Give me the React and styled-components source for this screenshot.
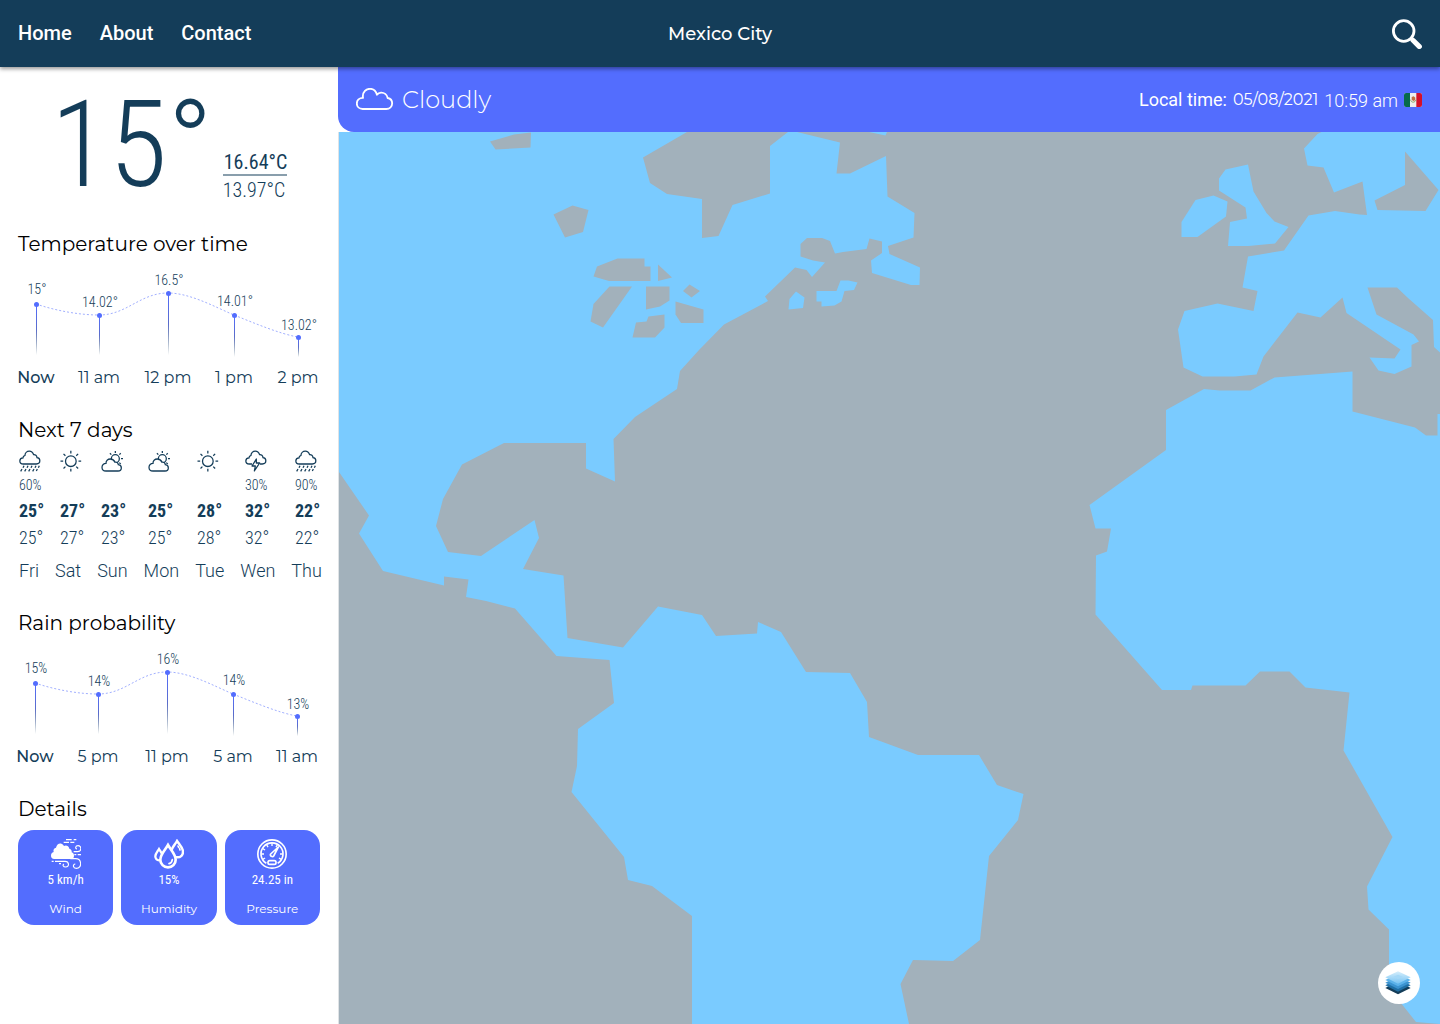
import React from "react";
import styled, { createGlobalStyle } from "styled-components";

const navy = "#143d59";
const indigo = "#536dfe";
const land = "#7acbff";
const sea = "#a2b1bb";
const roboto = `Roboto, "Liberation Sans", sans-serif`;
const condensed = `"Roboto Condensed", Roboto, sans-serif`;
const montserrat = `Montserrat, Inter, sans-serif`;

const GlobalStyle = createGlobalStyle`
  *, *::before, *::after { box-sizing: border-box; }
  body { margin: 0; background: #fff; color: ${navy}; font-family: ${roboto}; }
  h2, p, ul, dl, dd { margin: 0; padding: 0; }
`;

const Page = styled.div`
  min-height: 100vh;
  display: flex;
  flex-direction: column;
`;

/* ---------- header ---------- */

const Header = styled.header`
  position: relative;
  z-index: 1;
  display: grid;
  grid-template-columns: 1fr auto 1fr;
  align-items: center;
  min-height: 67px;
  padding: 0 18px;
  color: #fff;
  background: ${navy};
  box-shadow: 0 2px 4px rgba(0, 0, 0, 0.4);
`;

const Nav = styled.nav`
  display: flex;
  gap: 28px;
  padding-bottom: 2px;
`;

const NavLink = styled.a`
  color: inherit;
  font-size: 20px;
  font-weight: 500;
  line-height: 24px;
  text-decoration: none;
`;

const City = styled.span`
  font-family: ${montserrat};
  font-size: 18px;
  font-weight: 500;
  line-height: 24px;
`;

const IconButton = styled.button`
  display: flex;
  justify-self: end;
  padding: 0;
  border: 0;
  color: inherit;
  background: none;
  cursor: pointer;
`;

/* ---------- layout ---------- */

const Body = styled.div`
  flex: 1;
  display: flex;
`;

const Sidebar = styled.aside`
  flex: none;
  width: 338px;
  padding: 18px;
`;

const Main = styled.main`
  flex: 1;
  min-width: 0;
  display: flex;
  flex-direction: column;
`;

const Section = styled.section`
  margin-bottom: 26px;
`;

const Heading = styled.h2`
  color: #000;
  font-family: ${montserrat};
  font-size: 20px;
  font-weight: 400;
  line-height: 24px;
`;

/* ---------- current temperature ---------- */

const Current = styled.div`
  display: flex;
  justify-content: center;
  align-items: flex-end;
  gap: 10px;
  margin-bottom: 27px;
`;

const BigTemp = styled.p`
  font-family: ${condensed};
  font-size: 120px;
  font-weight: 300;
  line-height: 120px;
`;

const Range = styled.div`
  padding-bottom: 3px;
  font-family: ${condensed};
  font-size: 20px;
  line-height: 24px;
`;

const High = styled.p`
  padding-left: 1px;
  border-bottom: 2px solid rgba(20, 61, 89, 0.5);
`;

const Low = styled.p`
  padding-top: 2px;
  font-weight: 300;
`;

/* ---------- charts ---------- */

const ChartSvg = styled.svg`
  display: block;
  width: 100%;
  overflow: visible;
`;

const ValueText = styled.text`
  fill: ${navy};
  font-family: ${condensed};
  font-size: 14px;
  font-weight: 300;
  text-anchor: middle;
`;

const TimeText = styled.text`
  fill: ${navy};
  font-family: ${montserrat};
  font-size: 16px;
  font-weight: ${(p) => (p.$now ? 500 : 400)};
  text-anchor: middle;
`;

/* ---------- week ---------- */

const Week = styled.table`
  display: block;
  margin-top: 8px;
  padding-left: 1px;
  white-space: nowrap;
`;

const WeekGroup = styled.tbody`
  display: block;
`;

const WeekRow = styled.tr`
  display: grid;
  grid-template-columns: 41px 41px 47px 49px 48px 50px auto;
  align-items: center;
  font-family: ${condensed};
  font-size: ${(p) => (p.$small ? 14 : 18)}px;
  font-weight: ${(p) => (p.$strong ? 700 : 300)};
  line-height: ${(p) => (p.$small ? 24 : 27)}px;
`;

const DayRow = styled.tr`
  display: flex;
  gap: 16px;
  padding: 6px 0 1px;
  font-size: 18px;
  line-height: 27px;
`;

const Cell = styled.td`
  padding: 0;
  height: ${(p) => (p.$icon ? "23px" : "auto")};
`;

const DayCell = styled.th`
  padding: 0;
  font-weight: 300;
`;

/* ---------- details ---------- */

const Cards = styled.dl`
  display: grid;
  grid-template-columns: repeat(3, 1fr);
  gap: 8px;
  margin-top: 9px;
`;

const Card = styled.div`
  display: flex;
  flex-direction: column;
  align-items: center;
  padding: 9px 0 8px;
  border-radius: 16px;
  color: #fff;
  background: ${indigo};
  line-height: 16px;
`;

const CardValue = styled.dd`
  padding: 3px 0 13px;
  font-family: ${condensed};
  font-size: 13px;
`;

const CardLabel = styled.dt`
  order: 1;
  font-family: ${montserrat};
  font-size: 12px;
`;

/* ---------- banner and map ---------- */

const Banner = styled.div`
  display: flex;
  align-items: center;
  justify-content: space-between;
  min-height: 65px;
  padding: 0 18px;
  border-bottom-left-radius: 16px;
  color: #fff;
  background: ${indigo};
`;

const Condition = styled.div`
  display: flex;
  align-items: center;
  gap: 8px;
  font-family: ${montserrat};
  font-size: 24px;
  font-weight: 300;
  line-height: 32px;
`;

const LocalTime = styled.div`
  display: flex;
  align-items: center;
  gap: 6px;
  font-size: 18px;
  line-height: 24px;
`;

const DateText = styled.time`
  font-family: ${montserrat};
  font-size: 16px;
`;

const ClockText = styled.time`
  padding-top: 2px;
  font-weight: 300;
`;

const MapPanel = styled.div`
  position: relative;
  flex: 1;
  min-height: 400px;
  border-left: 1px solid #dfe3e6;
  background: ${sea};
  overflow: hidden;
`;

const MapSvg = styled.svg`
  position: absolute;
  inset: 0;
  width: 100%;
  height: 100%;
`;

const LayersButton = styled.button`
  position: absolute;
  right: 20px;
  bottom: 20px;
  display: grid;
  place-items: center;
  width: 42px;
  height: 42px;
  padding: 0 2px 0 0;
  border: 0;
  border-radius: 50%;
  background: #fff;
  cursor: pointer;
`;

/* ---------- icons ---------- */

const SearchIcon = () => (
  <svg width="30" height="30" viewBox="0 0 30 30" fill="none" stroke="#fff" aria-hidden="true">
    <circle cx="11.7" cy="12" r="10.3" strokeWidth="2.8" />
    <path d="M18.6 19 L21 21.5" strokeWidth="3" />
    <path d="M21 21.3 L27.4 27.6" strokeWidth="5" strokeLinecap="round" />
  </svg>
);

const CloudIcon = () => (
  <svg width="38" height="24" viewBox="0 0 114 72" fill="none" stroke="#fff" strokeWidth="5.6" strokeLinejoin="round" aria-hidden="true">
    <path d="M20 63 H91 C101 63 108.500 56 108.500 46 C108.500 38 103 31.500 95 30 C93 20 84 13.500 75 14 C71 14.500 66 16.500 63 20 C60 9 52 2.500 42 2.500 C30 2.500 20.500 12 20.500 25 C20.500 27 20.500 28 21 29.500 C10 29.500 2.500 37 2.500 46.500 C2.500 56 10 63 20 63Z" />
  </svg>
);

const cloudTop =
  "H51 C57 40 61.500 36 61.500 30.500 C61.500 25.500 58 21.500 53 21 C52.500 15 48 11.500 43 12 C40.500 5.500 35.500 1.500 30 1.500 C22.500 1.500 17 7 17 14 C13.500 15 11 18 11 21.500 C5.500 22 1.500 26 1.500 31 C1.500 36 6 40 12 40";

const rays = (cx, cy, from, to, list) =>
  list
    .map((a) => {
      const c = Math.cos((a * Math.PI) / 180);
      const s = Math.sin((a * Math.PI) / 180);
      return `M${cx + c * from} ${cy + s * from}L${cx + c * to} ${cy + s * to}`;
    })
    .join("");

const weatherShapes = {
  rain: (
    <>
      <path d={`M12 40 ${cloudTop}Z`} />
      <path d="M14 45l-3 6M26 45l-3 6M38 45l-3 6M50 45l-3 6M60 45l-3 6M8 55l-4 7M20 55l-4 7M32 55l-4 7M44 55l-4 7M54 55l-3 6" />
    </>
  ),
  sun: (
    <>
      <circle cx="31.500" cy="31.500" r="16" />
      <path d={rays(31.5, 31.5, 23, 31, [0, 45, 90, 135, 180, 225, 270, 315])} />
    </>
  ),
  partly: (
    <>
      <circle cx="42" cy="24" r="12" />
      <path d={rays(42, 24, 17, 23, [-90, -45, 0, 45, 225])} />
      <path
        fill="#fff"
        d="M14 61 H50 C56 61 60 57 60 52 C60 46.500 56 42.500 51 42 C50 36 46 33.500 41 34.500 C38 28 32 25 27 25 C19 25 14 31 14 38 C7 38 2 43 2 49.500 C2 56 7 61 14 61Z"
      />
    </>
  ),
  storm: (
    <>
      <path d="M20 40 H12 C6 40 1.500 36 1.500 31 C1.500 26 5.500 22 11 21.500 C11 18 13.500 15 17 14 C17 7 22.500 1.500 30 1.500 C35.500 1.500 40.500 5.500 43 12 C48 11.500 52.500 15 53 21 C58 21.500 61.500 25.500 61.500 30.500 C61.500 36 57 40 51 40 H44" />
      <path d="M33 25 L20 46 H30 L27 61 L43 37 H33Z" strokeLinejoin="round" />
    </>
  ),
};

const WeatherIcon = ({ kind }) => (
  <svg width="23" height="22" viewBox="-1 -2 69 66" fill="none" stroke={navy} strokeWidth="3.8" role="img" aria-label={kind}>
    {weatherShapes[kind]}
  </svg>
);

const detailShapes = {
  wind: (
    <>
      <path
        fill="#fff"
        stroke="none"
        d="M10 60 C3 60 0 55 0 50 C0 44 3 40 8 39 C6 32 9 27 15 26 C17 17 24 12 31 14 C35 15 37 18 39 21 C46 17 53 21 55 29 C61 31 63 35 62 40 C67 41 69 46 69 50 C69 56 66 60 60 60Z"
      />
      <path
        strokeWidth="3.4"
        d="M45 2H62M68 2H76M38 10H54M58 10H70M68 38H80C92 38 93 20 81 20C73 20 72 29 78 30M70 47H76M80 47H90M2 67H8M12 67H42C55 67 56 84 44 84C36 84 34 77 39 75M58 59H74C93 59 94 88 76 88C66 88 64 76 73 75M24 74H30"
      />
    </>
  ),
  humidity: (
    <>
      <path strokeWidth="7" d="M15 30C10 38 4 45 4 52C4 59 9 64 15 64C22 64 26 59 26 52C26 45 20 38 15 30Z" />
      <path strokeWidth="7.5" d="M69 6C63 17 52 27 52 38C52 48 60 55 70 55C80 55 87 48 87 38C87 27 76 17 69 6Z" />
      <path fill={indigo} strokeWidth="8" d="M42 18C34 32 19 46 19 62C19 75 29 85 42 85C55 85 65 75 65 62C65 46 50 32 42 18Z" />
      <path strokeWidth="5" strokeLinecap="round" d="M55 62C54 69 50 73 45 74M72 21L74 25M77 29L78 33" />
    </>
  ),
  pressure: (
    <>
      <circle cx="45" cy="45" r="42.500" strokeWidth="5" />
      <path strokeWidth="5" d="M28 73A33 33 0 1 1 62 73" />
      <path strokeWidth="4" d={rays(45, 45, 24, 32, [-180, -150, -120, -90, -60, 0, 150, 30])} />
      <path strokeWidth="5" strokeLinejoin="round" d="M41 45L64 24L50 51C47 55 37 51 41 45Z" />
      <rect x="33" y="65" width="24" height="11" rx="5" strokeWidth="5" />
    </>
  ),
};

const DetailIcon = ({ kind }) => (
  <svg width="30" height="30" viewBox="0 0 90 90" fill="none" stroke="#fff" aria-hidden="true">
    {detailShapes[kind]}
  </svg>
);

const FlagIcon = () => (
  <svg width="18" height="14" viewBox="0 0 54 42" role="img" aria-label="Mexico">
    <defs>
      <clipPath id="flag-shape">
        <rect width="54" height="42" rx="6" />
      </clipPath>
    </defs>
    <g clipPath="url(#flag-shape)">
      <path fill="#eee" d="M0 0H54V42H0Z" />
      <path fill="#066a4a" d="M0 0H18V42H0Z" />
      <path fill="#d3102a" d="M37 0H54V42H37Z" />
    </g>
    <path fill="#c0703f" d="M23 12l6-2 5 4-1 8-5 2-5-4z" />
    <path fill="none" stroke="#8ea96a" strokeWidth="3" d="M20 20C20 30 35 30 35 20" />
  </svg>
);

const layerColors = ["#143d59", "#1f6fa5", "#3b93d0", "#5cb2ea"];

const LayersIcon = () => (
  <svg width="26" height="24" viewBox="0 0 78 72" aria-hidden="true">
    <defs>
      <linearGradient id="layer-top" x1="0" y1="0" x2="0" y2="1">
        <stop offset="0" stopColor="#d5eefc" />
        <stop offset="1" stopColor="#79c4f3" />
      </linearGradient>
    </defs>
    {layerColors.map((color, i) => (
      <path key={color} fill={color} d={`M39 ${30 - i * 7}L77 ${51 - i * 8}L39 ${70 - i * 8}L1 ${51 - i * 8}Z`} />
    ))}
    <path fill="url(#layer-top)" d="M39 1L77 19L39 38L1 19Z" />
    <path fill="#a5d8f7" d="M39 11L53 17L39 24L25 17Z" />
  </svg>
);

/* ---------- data ---------- */

const temperature = [
  { x: 18, y: 48, end: 99, gap: 10, value: "15°", time: "Now" },
  { x: 81, y: 59, end: 99, gap: 8, value: "14.02°", time: "11 am" },
  { x: 150, y: 37, end: 99, gap: 8, value: "16.5°", time: "12 pm" },
  { x: 216, y: 59, end: 101, gap: 9, value: "14.01°", time: "1 pm" },
  { x: 280, y: 81, end: 101, gap: 7, value: "13.02°", time: "2 pm" },
];

const rain = [
  { x: 17, y: 48, end: 99, gap: 10, value: "15%", time: "Now" },
  { x: 80, y: 59, end: 99, gap: 8, value: "14%", time: "5 pm" },
  { x: 149, y: 37, end: 99, gap: 8, value: "16%", time: "11 pm" },
  { x: 215, y: 59, end: 101, gap: 9, value: "14%", time: "5 am" },
  { x: 279, y: 81, end: 101, gap: 7, value: "13%", time: "11 am" },
];

const days = [
  { day: "Fri", icon: "rain", chance: "60%", high: "25°", low: "25°" },
  { day: "Sat", icon: "sun", chance: "", high: "27°", low: "27°" },
  { day: "Sun", icon: "partly", chance: "", high: "23°", low: "23°" },
  { day: "Mon", icon: "partly", chance: "", high: "25°", low: "25°" },
  { day: "Tue", icon: "sun", chance: "", high: "28°", low: "28°" },
  { day: "Wen", icon: "storm", chance: "30%", high: "32°", low: "32°" },
  { day: "Thu", icon: "rain", chance: "90%", high: "22°", low: "22°" },
];

const details = [
  { icon: "wind", value: "5 km/h", label: "Wind" },
  { icon: "humidity", value: "15%", label: "Humidity" },
  { icon: "pressure", value: "24.25 in", label: "Pressure" },
];

const curve = (p) =>
  `M${p[0].x} ${p[0].y}` +
  `C${p[0].x + 21} ${p[0].y + 7} ${p[1].x - 19} ${p[1].y} ${p[1].x} ${p[1].y}` +
  `C${p[1].x + 28} ${p[1].y} ${p[2].x - 28} ${p[2].y} ${p[2].x} ${p[2].y}` +
  `C${p[2].x + 22} ${p[2].y} ${p[3].x - 19} ${p[3].y - 8} ${p[3].x} ${p[3].y}` +
  `C${p[3].x + 20} ${p[3].y + 8} ${p[4].x - 18} ${p[4].y - 3} ${p[4].x} ${p[4].y}`;

const Chart = ({ id, label, points }) => (
  <ChartSvg viewBox="0 0 302 136" role="img" aria-label={label}>
    <defs>
      <linearGradient id={id} x1="0" y1="0" x2="0" y2="1">
        <stop offset="0" stopColor={indigo} />
        <stop offset="0.5" stopColor="#5a6ccb" />
        <stop offset="1" stopColor={navy} stopOpacity="0" />
      </linearGradient>
    </defs>
    <path d={curve(points)} fill="none" stroke={indigo} strokeOpacity="0.55" strokeDasharray="2 2" />
    {points.map((p) => (
      <g key={p.time}>
        <rect x={p.x} y={p.y} width="1" height={p.end - p.y} fill={`url(#${id})`} />
        <circle cx={p.x + 0.5} cy={p.y + 0.5} r="2.500" fill={indigo} />
        <ValueText x={p.x + 1} y={p.y - p.gap}>{p.value}</ValueText>
        <TimeText $now={p.time === "Now"} x={p.x} y="127">{p.time}</TimeText>
      </g>
    ))}
  </ChartSvg>
);

const lands = [
  // the Americas
  "339,132 687,132 643,157.5 650,183 667,194 702,199 702,238 718.5,236 732.5,205 770,193.5 770,146 788,132 797,132 840,142.5 836.5,173.5 850,173.5 886,156 887.5,196.5 914.5,213 913.5,237.5 888,246 889.5,254 920,267.5 919.5,285 911,285 872,273 871,260.5 882,253 882,241.5 869.5,238.5 866.5,249 843,252 835,253.5 830,241 822,238 807,238 800.5,244 800.5,256.5 813,260.5 825,262.5 812,277 806.5,270 795,267.5 765,296.5 768,301 724,324.5 699,350 680,371 677,389 635,417 613.5,439 615,481.5 586,468.5 586,443 504,443 462,464.5 443,499 436,526 448,552 481,556 534.5,520 539,538 523,569 563.5,575.5 567.5,638 623,647.5 658,606.5 702,615 716,636 757,633.5 758,622 781,632 806,672 850,673 867,702 869,737 918,755 979,755 997,785 1023.5,794 1018,820 989,856 980,940 953,961 913,960 900.5,984 909,1024 692,1024 692,916 652,886 628,880 624,857 571.5,792 577,766 578,729 614,703 609.5,660 556.5,656 515,608.5 486,601 466,597 468.5,579.5 444,576.5 444,585.5 383,571 359,533.5 369,515.5 339,472",
  "869,132 887,132 885.5,135.5",
  // Atlantic islands
  "796,291.5 804.5,297.5 803,308 788.5,309.5 789.5,299",
  "816.5,291 836.5,291 840.5,280.5 848.5,280.5 857.5,282.5 854,290 844.5,291 841.5,301.5 834.5,305.5 821.5,306.5 821.5,301.5 816.5,301.5",
  // Britain and Ireland
  "1248,164.5 1253.5,191.5 1266.5,213 1274.5,221.5 1288.5,227 1275,243.5 1248.5,246 1228,246 1230,222 1247,218.5 1245.5,207.5 1219,190.5 1219,178.5 1225.5,169.5",
  "1213.5,195.5 1227.5,201.5 1226,216.5 1197.5,237 1181.5,237 1181.5,222 1195.5,200",
  // Europe
  "1440,132 1321.5,132 1317.5,134 1304,148.5 1307.5,165.5 1323.5,167.5 1334,192.5 1362.5,181.5 1367,215 1359.5,214.5 1335,211 1308.5,215.5 1284,250.5 1248,256.5 1242.5,287.5 1257.5,291 1253.5,311 1217.5,303.5 1184.5,311 1178,329.5 1183.5,367.5 1202.5,376.5 1234.5,376.5 1256.5,374.5 1263.5,356.5 1297.5,312.5 1320.5,317.5 1342.5,297.5 1346.5,313 1400.5,349.5 1394.5,358.5 1369.5,357.5 1378.5,370.5 1394.5,374 1411.5,366.5 1411.5,345 1419,341.5 1413.5,334.5 1376.5,314.5 1367.5,287.5 1397,287.5 1408,298 1433,320 1434,347 1440,352.5",
  // Africa
  "1166,410 1204,389 1219.5,390.5 1250.5,390.5 1274.5,377.5 1352.5,371.5 1352.5,411.5 1415,427.5 1426,435.5 1437.5,435.5 1437.5,414 1440,414 1440,1024 1416,1022 1389,988 1389,929.5 1368.5,909.5 1367,886.5 1392.5,837 1343.5,750.5 1349.5,692.5 1305.5,687.5 1289.5,671.5 1260,671.5 1245.5,685.5 1192.5,685.5 1191,690 1162,690 1095.5,614.5 1096,555.5 1107,551.5 1111,528.5 1095.5,528.5 1089.5,505 1166,450",
];

const waters = [
  "490,141.5 514,134.5 531,132.5 530.5,147.5 495.5,149.5",
  "553.5,214.5 572.5,205.5 588.5,210 583,232 565,237.5",
  "617.5,258.5 644.5,258.5 644.5,266.5 650.5,266.5 650.5,281 609,281 593.5,276.5 597,266.5",
  "658,264.5 672,277.5 658,281",
  "609.5,286.5 632,286.5 603,327.5 590.5,321.5 593.5,304",
  "646,286.5 669.5,286.5 669.5,300.5 660,306.5 646,309.5",
  "689.5,284.5 700,291 691.5,297.5 683,291",
  "675.5,301.5 703.5,309.5 703.5,323 681,323 675.5,314.5",
  "648.5,316.5 664.5,314.5 664.5,327.5 655,337.5 632.5,337.5 636,322.5 646.5,321.5",
  "1405,151.5 1438.5,190 1425.5,211 1377.5,210 1374.5,200.5 1405,185",
];

export default function App() {
  return (
    <Page>
      <GlobalStyle />
      <Header>
        <Nav>
          <NavLink href="#home">Home</NavLink>
          <NavLink href="#about">About</NavLink>
          <NavLink href="#contact">Contact</NavLink>
        </Nav>
        <City>Mexico City</City>
        <IconButton type="button" aria-label="Search">
          <SearchIcon />
        </IconButton>
      </Header>
      <Body>
        <Sidebar>
          <Current>
            <BigTemp>15°</BigTemp>
            <Range>
              <High>16.64°C</High>
              <Low>13.97°C</Low>
            </Range>
          </Current>
          <Section>
            <Heading>Temperature over time</Heading>
            <Chart id="stem-temperature" label="Temperature over time" points={temperature} />
          </Section>
          <Section>
            <Heading>Next 7 days</Heading>
            <Week>
              <WeekGroup>
                <WeekRow $small>
                  {days.map((d) => (
                    <Cell key={d.day} $icon>
                      <WeatherIcon kind={d.icon} />
                    </Cell>
                  ))}
                </WeekRow>
                <WeekRow $small>
                  {days.map((d) => (
                    <Cell key={d.day}>{d.chance}</Cell>
                  ))}
                </WeekRow>
              </WeekGroup>
              <WeekGroup>
                <WeekRow $strong>
                  {days.map((d) => (
                    <Cell key={d.day}>{d.high}</Cell>
                  ))}
                </WeekRow>
                <WeekRow>
                  {days.map((d) => (
                    <Cell key={d.day}>{d.low}</Cell>
                  ))}
                </WeekRow>
                <DayRow>
                  {days.map((d) => (
                    <DayCell key={d.day} scope="col">{d.day}</DayCell>
                  ))}
                </DayRow>
              </WeekGroup>
            </Week>
          </Section>
          <Section>
            <Heading>Rain probability</Heading>
            <Chart id="stem-rain" label="Rain probability" points={rain} />
          </Section>
          <Section>
            <Heading>Details</Heading>
            <Cards>
              {details.map((d) => (
                <Card key={d.label}>
                  <DetailIcon kind={d.icon} />
                  <CardLabel>{d.label}</CardLabel>
                  <CardValue>{d.value}</CardValue>
                </Card>
              ))}
            </Cards>
          </Section>
        </Sidebar>
        <Main>
          <Banner>
            <Condition>
              <CloudIcon />
              Cloudly
            </Condition>
            <LocalTime>
              <span>Local time:</span>
              <DateText dateTime="2021-08-05">05/08/2021</DateText>
              <ClockText dateTime="10:59">10:59 am</ClockText>
              <FlagIcon />
            </LocalTime>
          </Banner>
          <MapPanel>
            <MapSvg viewBox="339 132 1101 892" preserveAspectRatio="xMinYMin slice" role="img" aria-label="Map">
              {lands.map((points) => (
                <polygon key={points} points={points} fill={land} />
              ))}
              {waters.map((points) => (
                <polygon key={points} points={points} fill={sea} />
              ))}
            </MapSvg>
            <LayersButton type="button" aria-label="Map layers">
              <LayersIcon />
            </LayersButton>
          </MapPanel>
        </Main>
      </Body>
    </Page>
  );
}
